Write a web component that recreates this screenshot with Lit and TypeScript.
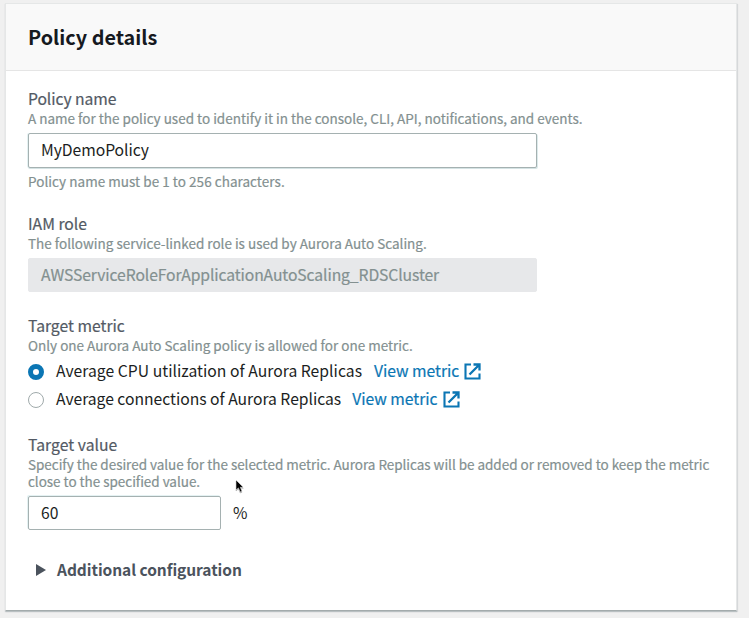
import { LitElement, html, css } from "lit";
import { customElement } from "lit/decorators.js";

@customElement("metric-link")
class MetricLink extends LitElement {
  static styles = css`
    :host { display: inline-flex; align-items: center; color: #0b76b4; letter-spacing: -0.02px; -webkit-text-stroke: 0.2px currentColor; }
    svg { width: 17px; height: 17px; margin-left: 5px; flex: none; }
  `;
  render() {
    return html`<span>View metric</span>
      <svg viewBox="0 0 17 17" fill="none" stroke="currentColor" stroke-width="2.1">
        <path d="M7 1.5H1.5V15.5H15.5V10.5"></path>
        <path d="M9.5 1.5H15.5V7.5M15 2L5.5 11.5" stroke-width="2.3"></path>
      </svg>`;
  }
}

@customElement("app-root")
class AppRoot extends LitElement {
  static styles = css`
    * { box-sizing: border-box; }
    :host {
      display: block; position: relative; box-sizing: border-box; height: 618px;
      padding: 3px 12px 8px 5px; background: #f0f0f0; overflow: hidden;
      font: 15.7px/22px "Noto Sans CJK SC", "Noto Sans", sans-serif; color: #1b1e22;
    }
    .card {
      height: 608px; background: #fff; border: 1px solid #e5e7e7; border-bottom: 1px solid #a3abac;
      box-shadow: 0 1px 1px rgba(0, 28, 36, 0.16), 1px 1px 1px rgba(0, 28, 36, 0.08);
    }
    .header { height: 67px; padding: 0 22px; background: #f9f9f9; border-bottom: 1px solid #e5e5e5; }
    h2 { margin: 0; font-size: 19.8px; line-height: 66px; font-weight: 700; color: #16191f; }
    .body { padding: 17px 22px 0; }
    .field { display: flex; flex-direction: column; }
    .label { color: #535a64; -webkit-text-stroke: 0.2px currentColor; }
    .hint { font-size: 13.5px; line-height: 17px; color: #839090; -webkit-text-stroke: 0.2px currentColor; white-space: nowrap; }
    .name { height: 125px; }
    .role { height: 102px; }
    .metric { height: 119px; }
    .value { height: 121px; }
    .box {
      display: flex; align-items: center; width: 509px; height: 35px; padding: 0 12px 1px;
      border: 1px solid #a5b1b1; border-radius: 2px; margin-top: 6px; background: #fff; letter-spacing: -0.05px;
    }
    .glow { box-shadow: 0 1px 0 #d5e3e4, 1px 1px 0 #dceaeb, -1px 0 0 #e4f1f2; }
    .name .label { letter-spacing: -0.08px; }
    .name .note { margin-top: 5px; letter-spacing: 0.04px; }
    .disabled { height: 34px; background: #e7e8ea; border-color: #e7e8ea; color: #839090; letter-spacing: -0.1px; -webkit-text-stroke: 0.2px currentColor; }
    .options { margin-top: 3px; }
    .option { display: flex; align-items: center; height: 28px; letter-spacing: -0.02px; }
    .option.wide { letter-spacing: 0.03px; }
    .option metric-link { margin-left: 11px; }
    .option.wide metric-link { margin-left: 12px; }
    .radio { width: 16px; height: 16px; margin: 1px 12px 0 0; border: 1px solid #a0aaab; border-radius: 50%; background: #fff; flex: none; }
    .checked { border: 5px solid #0b76b4; }
    .value .label { letter-spacing: 0.05px; }
    .value .hint { letter-spacing: -0.03px; }
    .number { display: flex; align-items: center; gap: 12px; margin-top: 6px; }
    .number .box { width: 193px; height: 34px; margin: 0; box-shadow: -1px -1px 0 #e4f1f2; }
    .expander { display: flex; align-items: center; gap: 11px; height: 28px; padding-left: 8px; font-size: 15.5px; font-weight: 700; letter-spacing: -0.05px; color: #4b535d; }
    .expander svg { width: 10px; height: 12px; margin-top: 1px; }
    .pointer { position: absolute; left: 235px; top: 479px; width: 9px; height: 14px; filter: drop-shadow(0 1px 0.5px rgba(0, 0, 0, 0.35)); }
  `;
  render() {
    return html`
      <section class="card">
        <div class="header"><h2>Policy details</h2></div>
        <div class="body">
          <div class="field name">
            <div class="label">Policy name</div>
            <div class="hint">A name for the policy used to identify it in the console, CLI, API, notifications, and events.</div>
            <div class="box glow">MyDemoPolicy</div>
            <div class="hint note">Policy name must be 1 to 256 characters.</div>
          </div>
          <div class="field role">
            <div class="label">IAM role</div>
            <div class="hint">The following service-linked role is used by Aurora Auto Scaling.</div>
            <div class="box disabled">AWSServiceRoleForApplicationAutoScaling_RDSCluster</div>
          </div>
          <div class="field metric">
            <div class="label">Target metric</div>
            <div class="hint">Only one Aurora Auto Scaling policy is allowed for one metric.</div>
            <div class="options">
              <div class="option wide"><span class="radio checked"></span>Average CPU utilization of Aurora Replicas<metric-link></metric-link></div>
              <div class="option"><span class="radio"></span>Average connections of Aurora Replicas<metric-link></metric-link></div>
            </div>
          </div>
          <div class="field value">
            <div class="label">Target value</div>
            <div class="hint">Specify the desired value for the selected metric. Aurora Replicas will be added or removed to keep the metric<br />close to the specified value.</div>
            <div class="number"><div class="box">60</div><span>%</span></div>
          </div>
          <div class="expander">
            <svg viewBox="0 0 10 12" fill="currentColor"><path d="M0 0L10 6L0 12Z"></path></svg>
            <span>Additional configuration</span>
          </div>
        </div>
      </section>
      <svg class="pointer" viewBox="0 0 9 14"><path d="M1 1V11L3.4 8.9L5.2 13L7 12.2L5.3 8.3H8.3Z" fill="#000" stroke="#fff" stroke-width=".5"></path></svg>
    `;
  }
}
